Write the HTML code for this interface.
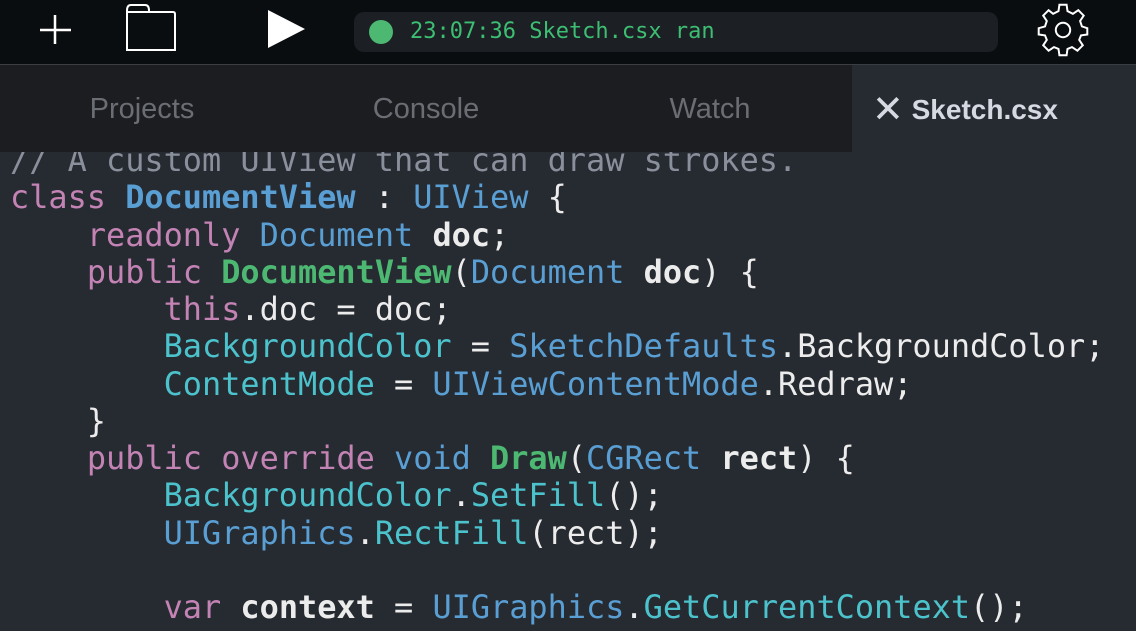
<!DOCTYPE html>
<html><head><style>
html,body{margin:0;padding:0;width:1136px;height:631px;overflow:hidden;background:#262a31}
.top{position:absolute;left:0;top:0;width:1136px;height:64px;background:#0a0d10;border-bottom:1px solid #3a3d42}
.pill{position:absolute;left:354px;top:12px;width:644px;height:40px;background:#1c1f24;border-radius:10px}
.dot{position:absolute;left:369px;top:20px;width:24px;height:24px;border-radius:50%;background:#4cb872}
.st{position:absolute;left:410px;top:17px;font:22px "DejaVu Sans Mono","Liberation Mono",monospace;color:#3dbf73;line-height:30px}
.tabs{position:absolute;left:0;top:65px;width:852px;height:87px;background:#1c1d20}
.tab{position:absolute;top:66px;height:87px;width:284px;text-align:center;font:29px "Liberation Sans",sans-serif;line-height:87px;color:#6a6d74}
.code{position:absolute;left:10px;top:142px;font:31.9px "DejaVu Sans Mono","Liberation Mono",monospace;line-height:37.25px;white-space:pre;color:#ececec}
.c{color:#8a8f9c}.k{color:#c383b4}.t{color:#5a9fd4}.g{color:#4cb872;font-weight:bold}.p{color:#4cc3cc}.b{font-weight:bold;color:#ececec}.tb{color:#5a9fd4;font-weight:bold}
</style></head><body>
<div class="code"><span class="c">// A custom UIView that can draw strokes.</span>
<span class="k">class</span> <span class="tb">DocumentView</span> : <span class="t">UIView</span> {
    <span class="k">readonly</span> <span class="t">Document</span> <span class="b">doc</span>;
    <span class="k">public</span> <span class="g">DocumentView</span>(<span class="t">Document</span> <span class="b">doc</span>) {
        <span class="k">this</span>.doc = doc;
        <span class="p">BackgroundColor</span> = <span class="t">SketchDefaults</span>.BackgroundColor;
        <span class="p">ContentMode</span> = <span class="t">UIViewContentMode</span>.Redraw;
    }
    <span class="k">public override</span> <span class="t">void</span> <span class="g">Draw</span>(<span class="t">CGRect</span> <span class="b">rect</span>) {
        <span class="p">BackgroundColor</span>.<span class="p">SetFill</span>();
        <span class="t">UIGraphics</span>.<span class="p">RectFill</span>(rect);

        <span class="k">var</span> <span class="b">context</span> = <span class="t">UIGraphics</span>.<span class="p">GetCurrentContext</span>();
</div>
<div class="top"></div>
<svg style="position:absolute;left:0;top:0" width="1136" height="64">
<path d="M55 15V44M40 30H71" stroke="#fff" stroke-width="2.5"/>
<path d="M127 10.5Q127 5 131 5H145Q149 5 149 10.5V12H173Q175 12 175 14V50H127Z" fill="none" stroke="#fff" stroke-width="2"/>
<path d="M127 12H149" stroke="#fff" stroke-width="2"/>
<path d="M268 10L305 29L268 48Z" fill="#fff"/>
<g transform="translate(1063,30) scale(0.9)" fill="none" stroke="#fff" stroke-width="2.2">
<path d="M-4 -25L4 -25L5 -18L11 -15L17 -19L23 -13L19 -7L21 -1L27 1L27 8L20 9L18 14L22 20L16 26L10 22L5 24L4 31L-4 31L-5 24L-10 22L-16 26L-22 20L-18 14L-20 9L-27 8L-27 1L-20 -1L-18 -7L-22 -13L-16 -19L-11 -15L-5 -18Z" transform="translate(0,-3)"/>
<circle cx="0" cy="0" r="8"/></g>
</svg>
<div class="pill"></div><div class="dot"></div>
<div class="st">23:07:36 Sketch.csx ran</div>
<div class="tabs"></div>
<div class="tab" style="left:0">Projects</div>
<div class="tab" style="left:284px">Console</div>
<div class="tab" style="left:568px">Watch</div>
<div class="tab" style="left:872px;width:auto;text-align:left;color:#d6d9e2;font-weight:bold;font-size:28px"><span style="font-weight:normal;font-size:38px;vertical-align:-3px">✕</span> Sketch.csx</div>
</body></html>
